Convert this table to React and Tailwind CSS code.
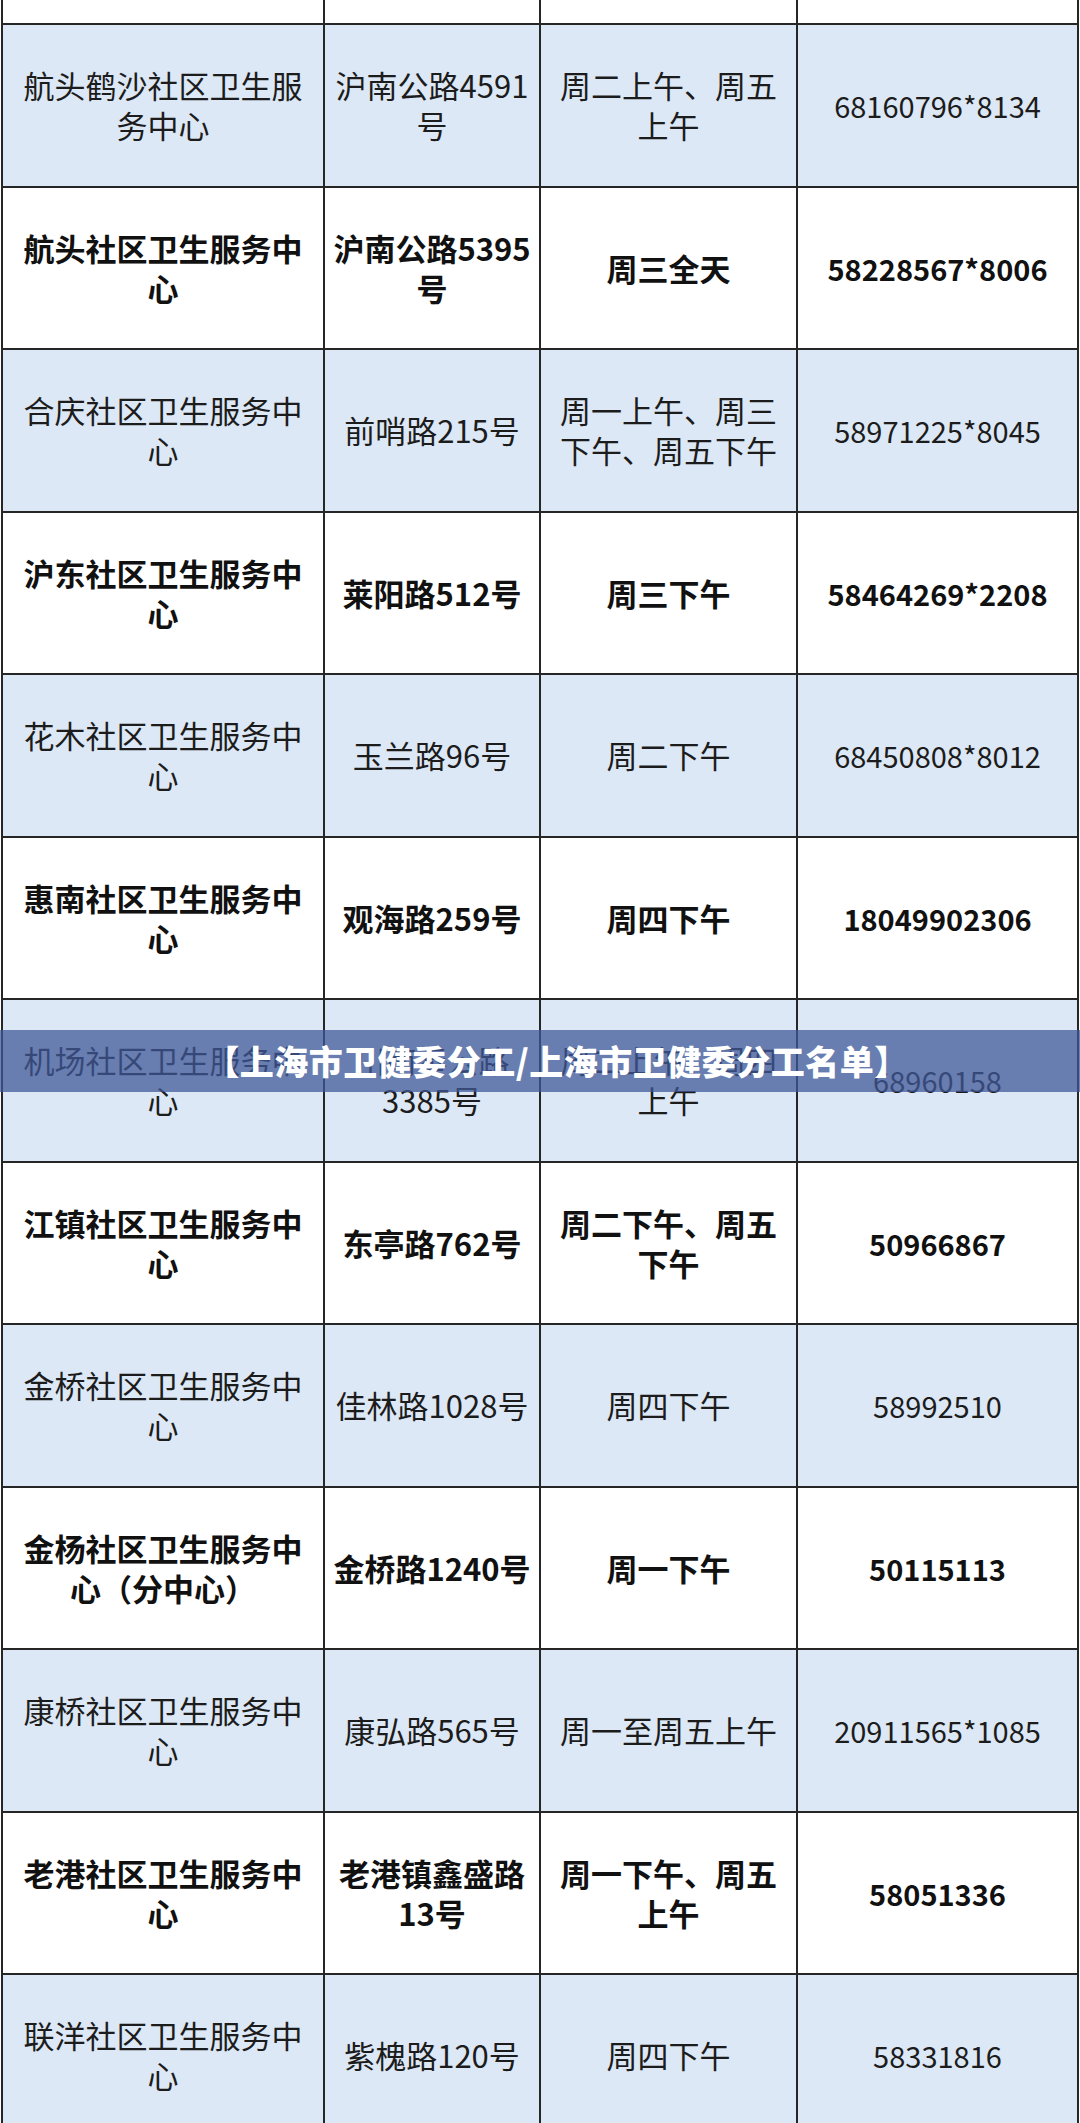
import React from 'react';

const rows = [
  {
    name: ['航头鹤沙社区卫生服', '务中心'],
    addr: ['沪南公路4591', '号'],
    time: ['周二上午、周五', '上午'],
    phone: '68160796*8134',
  },
  {
    name: ['航头社区卫生服务中', '心'],
    addr: ['沪南公路5395', '号'],
    time: ['周三全天'],
    phone: '58228567*8006',
  },
  {
    name: ['合庆社区卫生服务中', '心'],
    addr: ['前哨路215号'],
    time: ['周一上午、周三', '下午、周五下午'],
    phone: '58971225*8045',
  },
  {
    name: ['沪东社区卫生服务中', '心'],
    addr: ['莱阳路512号'],
    time: ['周三下午'],
    phone: '58464269*2208',
  },
  {
    name: ['花木社区卫生服务中', '心'],
    addr: ['玉兰路96号'],
    time: ['周二下午'],
    phone: '68450808*8012',
  },
  {
    name: ['惠南社区卫生服务中', '心'],
    addr: ['观海路259号'],
    time: ['周四下午'],
    phone: '18049902306',
  },
  {
    name: ['机场社区卫生服务中', '心'],
    addr: ['川南奉公路', '3385号'],
    time: ['周二上午、周四', '上午'],
    phone: '68960158',
  },
  {
    name: ['江镇社区卫生服务中', '心'],
    addr: ['东亭路762号'],
    time: ['周二下午、周五', '下午'],
    phone: '50966867',
  },
  {
    name: ['金桥社区卫生服务中', '心'],
    addr: ['佳林路1028号'],
    time: ['周四下午'],
    phone: '58992510',
  },
  {
    name: ['金杨社区卫生服务中', '心（分中心）'],
    addr: ['金桥路1240号'],
    time: ['周一下午'],
    phone: '50115113',
  },
  {
    name: ['康桥社区卫生服务中', '心'],
    addr: ['康弘路565号'],
    time: ['周一至周五上午'],
    phone: '20911565*1085',
  },
  {
    name: ['老港社区卫生服务中', '心'],
    addr: ['老港镇鑫盛路', '13号'],
    time: ['周一下午、周五', '上午'],
    phone: '58051336',
  },
  {
    name: ['联洋社区卫生服务中', '心'],
    addr: ['紫槐路120号'],
    time: ['周四下午'],
    phone: '58331816',
  },
];

const Cell = ({ lines, last }) => (
  <div
    className={`flex flex-col items-center justify-center text-center whitespace-nowrap ${
      last ? 'text-[29px]' : 'border-r-2 border-[#262626]'
    }`}
  >
    {lines.map((l, i) => (
      <span key={i}>{l}</span>
    ))}
  </div>
);

const Row = ({ row, index }) => {
  // odd rows are light blue / regular, even rows white / bold
  const blue = index % 2 === 0;
  return (
    <div
      className={`grid grid-cols-[322px_216px_257px_1fr] h-[162.5px] shrink-0 border-t-2 border-[#262626] ${
        blue ? 'bg-[#dce8f5] font-normal text-[#1c1c1c]' : 'bg-white font-bold text-[#111]'
      }`}
    >
      <Cell lines={row.name} />
      <Cell lines={row.addr} />
      <Cell lines={row.time} />
      <Cell lines={[row.phone]} last />
    </div>
  );
};

const App = () => {
  return (
    <div className="relative w-[1080px] h-[2123px] overflow-hidden bg-white px-[1px] font-['Noto_Sans_CJK_SC','Noto_Sans',sans-serif] text-[31px] leading-[40px]">
      <div className="flex flex-col border-x-2 border-[#262626]">
        {/* tail of the previous row */}
        <div className="grid grid-cols-[322px_216px_257px_1fr] h-[23px] shrink-0 bg-white">
          <div className="border-r-2 border-[#262626]" />
          <div className="border-r-2 border-[#262626]" />
          <div className="border-r-2 border-[#262626]" />
          <div />
        </div>
        {rows.map((row, i) => (
          <Row key={i} row={row} index={i} />
        ))}
      </div>

      {/* title banner over the table */}
      <div className="absolute left-0 top-[1030px] w-full h-[62px] bg-[rgba(64,88,151,0.74)] flex items-center justify-center pl-[34px]">
        <span className="text-white text-[34px] leading-none font-black tracking-[0.5px]">
          【上海市卫健委分工/上海市卫健委分工名单】
        </span>
      </div>
    </div>
  );
};

export default App;
